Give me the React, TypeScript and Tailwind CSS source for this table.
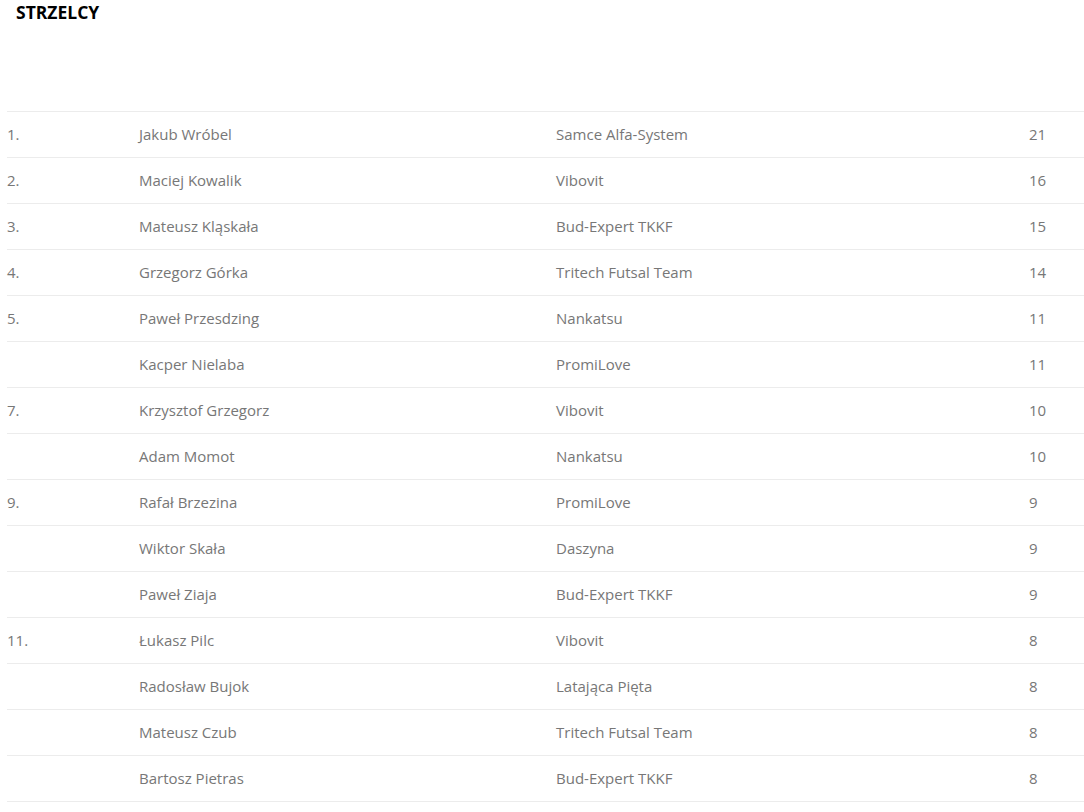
import React from "react";

type Scorer = {
  rank: string;
  name: string;
  team: string;
  goals: number;
};

const scorers: Scorer[] = [
  { rank: "1.", name: "Jakub Wróbel", team: "Samce Alfa-System", goals: 21 },
  { rank: "2.", name: "Maciej Kowalik", team: "Vibovit", goals: 16 },
  { rank: "3.", name: "Mateusz Kląskała", team: "Bud-Expert TKKF", goals: 15 },
  { rank: "4.", name: "Grzegorz Górka", team: "Tritech Futsal Team", goals: 14 },
  { rank: "5.", name: "Paweł Przesdzing", team: "Nankatsu", goals: 11 },
  { rank: "", name: "Kacper Nielaba", team: "PromiLove", goals: 11 },
  { rank: "7.", name: "Krzysztof Grzegorz", team: "Vibovit", goals: 10 },
  { rank: "", name: "Adam Momot", team: "Nankatsu", goals: 10 },
  { rank: "9.", name: "Rafał Brzezina", team: "PromiLove", goals: 9 },
  { rank: "", name: "Wiktor Skała", team: "Daszyna", goals: 9 },
  { rank: "", name: "Paweł Ziaja", team: "Bud-Expert TKKF", goals: 9 },
  { rank: "11.", name: "Łukasz Pilc", team: "Vibovit", goals: 8 },
  { rank: "", name: "Radosław Bujok", team: "Latająca Pięta", goals: 8 },
  { rank: "", name: "Mateusz Czub", team: "Tritech Futsal Team", goals: 8 },
  { rank: "", name: "Bartosz Pietras", team: "Bud-Expert TKKF", goals: 8 },
];

export default function App() {
  return (
    <div className="min-h-screen bg-white font-['Open_Sans',sans-serif]">
      <h2 className="pl-4 pt-[1px] text-[17.5px] font-bold leading-[23px] text-black">
        STRZELCY
      </h2>

      {/* scorers table */}
      <div className="ml-[7px] mt-[87px] border-t border-[#ececec]">
        {scorers.map((s, i) => (
          <div
            key={i}
            className="grid h-[46px] grid-cols-[132px_417px_473px_1fr] items-center border-b border-[#ececec] text-[15px] text-[#777777]"
          >
            <span>{s.rank}</span>
            <span>{s.name}</span>
            <span>{s.team}</span>
            <span>{s.goals}</span>
          </div>
        ))}
      </div>
    </div>
  );
}
